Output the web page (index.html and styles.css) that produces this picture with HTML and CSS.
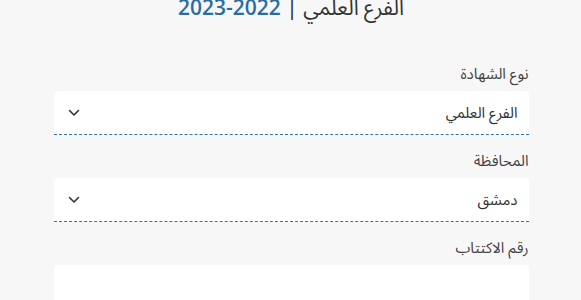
FILE: index.html
```html
<!DOCTYPE html>
<html lang="ar" dir="rtl">
<head>
<meta charset="utf-8">
<link rel="stylesheet" href="styles.css">
</head>
<body>
<div class="page">
  <h1 class="title">الفرع العلمي | <span class="years">2022-2023</span></h1>
  <form class="form">
    <div class="field">
      <label class="label">نوع الشهادة</label>
      <div class="select">
        <span class="value">الفرع العلمي</span>
        <svg class="chev" width="12" height="8" viewBox="0 0 12 8"><path d="M1.5 1.5 L6 6 L10.5 1.5" fill="none" stroke="#333" stroke-width="1.6" stroke-linecap="round" stroke-linejoin="round"/></svg>
      </div>
    </div>
    <div class="field">
      <label class="label">المحافظة</label>
      <div class="select">
        <span class="value">دمشق</span>
        <svg class="chev" width="12" height="8" viewBox="0 0 12 8"><path d="M1.5 1.5 L6 6 L10.5 1.5" fill="none" stroke="#333" stroke-width="1.6" stroke-linecap="round" stroke-linejoin="round"/></svg>
      </div>
    </div>
    <div class="field">
      <label class="label">رقم الاكتتاب</label>
      <div class="input"></div>
    </div>
  </form>
</div>
</body>
</html>
```
FILE: styles.css
```css
html, body {
  margin: 0;
  padding: 0;
  background: #f7f7f7;
  height: 100%;
  overflow: hidden;
}
body {
  font-family: "Noto Sans Arabic", "Noto Sans", "DejaVu Sans", sans-serif;
  color: #333;
}
.page {
  width: 475px;
  margin: 0 auto;
  padding-left: 1px;
}
.title {
  margin: -8px 0 39px 0;
  font-size: 21px;
  line-height: 30px;
  font-weight: 400;
  text-align: center;
  color: #333;
}
.years {
  color: #2b6ca3;
  font-family: "Open Sans", "Noto Sans", sans-serif;
  font-weight: 600;
}
.form {
  display: flex;
  flex-direction: column;
  gap: 14px;
}
.field {
  display: flex;
  flex-direction: column;
}
.label {
  display: block;
  font-size: 15px;
  line-height: 24px;
  height: 24px;
  margin-bottom: 5px;
  color: #444;
}
.select, .input {
  background: #fff;
  border-radius: 4px 4px 0 0;
  height: 43px;
  border-bottom: 1px dashed #2a78ad;
  display: flex;
  align-items: center;
  justify-content: space-between;
  padding: 0 11px 0 14px;
  box-sizing: content-box;
}
.input {
  border-bottom: none;
  border-radius: 4px;
}
.value {
  font-size: 15px;
  color: #333;
}
.chev {
  display: block;
}
```
